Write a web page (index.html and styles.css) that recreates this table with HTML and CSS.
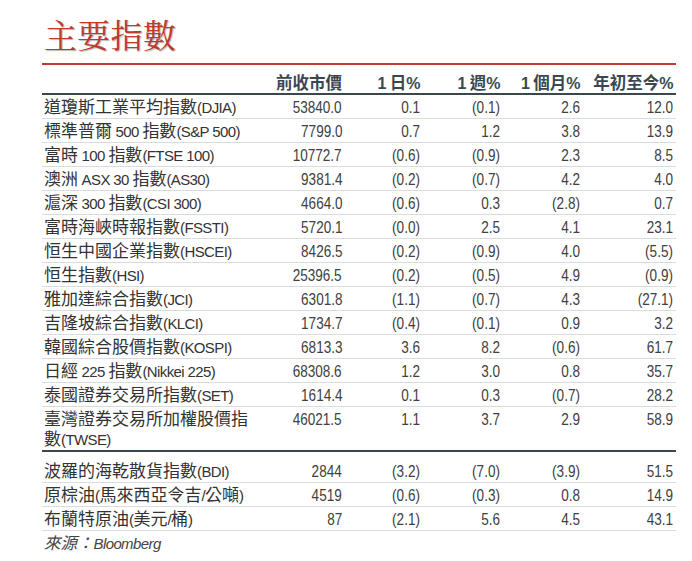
FILE: index.html
```html
<!DOCTYPE html>
<html lang="zh-Hant">
<head>
<meta charset="utf-8">
<title>主要指數</title>
<link rel="stylesheet" href="styles.css">
</head>
<body>
<div class="page">
  <h1 class="title">主要指數</h1>
  <table class="idx">
    <colgroup>
      <col class="c-name"><col class="c-prev"><col class="c-d"><col class="c-w"><col class="c-m"><col class="c-y">
    </colgroup>
    <thead>
      <tr><th></th><th>前收市價</th><th><span class="hn">1</span> 日<span class="hn">%</span></th><th><span class="hn">1</span> 週<span class="hn">%</span></th><th><span class="hn">1</span> 個月<span class="hn">%</span></th><th>年初至今<span class="hn">%</span></th></tr>
    </thead>
    <tbody>
      <tr><td class="name">道瓊斯工業平均指數<span class="lt">(DJIA)</span></td><td><span class="v">53840.0</span></td><td><span class="v">0.1</span></td><td><span class="v">(0.1)</span></td><td><span class="v">2.6</span></td><td><span class="v">12.0</span></td></tr>
      <tr><td class="name">標準普爾<span class="lt"> 500 </span>指數<span class="lt">(S&amp;P 500)</span></td><td><span class="v">7799.0</span></td><td><span class="v">0.7</span></td><td><span class="v">1.2</span></td><td><span class="v">3.8</span></td><td><span class="v">13.9</span></td></tr>
      <tr><td class="name">富時<span class="lt"> 100 </span>指數<span class="lt">(FTSE 100)</span></td><td><span class="v">10772.7</span></td><td><span class="v">(0.6)</span></td><td><span class="v">(0.9)</span></td><td><span class="v">2.3</span></td><td><span class="v">8.5</span></td></tr>
      <tr><td class="name">澳洲<span class="lt"> ASX 30 </span>指數<span class="lt">(AS30)</span></td><td><span class="v">9381.4</span></td><td><span class="v">(0.2)</span></td><td><span class="v">(0.7)</span></td><td><span class="v">4.2</span></td><td><span class="v">4.0</span></td></tr>
      <tr><td class="name">滬深<span class="lt"> 300 </span>指數<span class="lt">(CSI 300)</span></td><td><span class="v">4664.0</span></td><td><span class="v">(0.6)</span></td><td><span class="v">0.3</span></td><td><span class="v">(2.8)</span></td><td><span class="v">0.7</span></td></tr>
      <tr><td class="name">富時海峽時報指數<span class="lt">(FSSTI)</span></td><td><span class="v">5720.1</span></td><td><span class="v">(0.0)</span></td><td><span class="v">2.5</span></td><td><span class="v">4.1</span></td><td><span class="v">23.1</span></td></tr>
      <tr><td class="name">恒生中國企業指數<span class="lt">(HSCEI)</span></td><td><span class="v">8426.5</span></td><td><span class="v">(0.2)</span></td><td><span class="v">(0.9)</span></td><td><span class="v">4.0</span></td><td><span class="v">(5.5)</span></td></tr>
      <tr><td class="name">恒生指數<span class="lt">(HSI)</span></td><td><span class="v">25396.5</span></td><td><span class="v">(0.2)</span></td><td><span class="v">(0.5)</span></td><td><span class="v">4.9</span></td><td><span class="v">(0.9)</span></td></tr>
      <tr><td class="name">雅加達綜合指數<span class="lt">(JCI)</span></td><td><span class="v">6301.8</span></td><td><span class="v">(1.1)</span></td><td><span class="v">(0.7)</span></td><td><span class="v">4.3</span></td><td><span class="v">(27.1)</span></td></tr>
      <tr><td class="name">吉隆坡綜合指數<span class="lt">(KLCI)</span></td><td><span class="v">1734.7</span></td><td><span class="v">(0.4)</span></td><td><span class="v">(0.1)</span></td><td><span class="v">0.9</span></td><td><span class="v">3.2</span></td></tr>
      <tr><td class="name">韓國綜合股價指數<span class="lt">(KOSPI)</span></td><td><span class="v">6813.3</span></td><td><span class="v">3.6</span></td><td><span class="v">8.2</span></td><td><span class="v">(0.6)</span></td><td><span class="v">61.7</span></td></tr>
      <tr><td class="name">日經<span class="lt"> 225 </span>指數<span class="lt">(Nikkei 225)</span></td><td><span class="v">68308.6</span></td><td><span class="v">1.2</span></td><td><span class="v">3.0</span></td><td><span class="v">0.8</span></td><td><span class="v">35.7</span></td></tr>
      <tr><td class="name">泰國證券交易所指數<span class="lt">(SET)</span></td><td><span class="v">1614.4</span></td><td><span class="v">0.1</span></td><td><span class="v">0.3</span></td><td><span class="v">(0.7)</span></td><td><span class="v">28.2</span></td></tr>
      <tr class="grp-end"><td class="name">臺灣證券交易所加權股價指<br>數<span class="lt">(TWSE)</span></td><td><span class="v">46021.5</span></td><td><span class="v">1.1</span></td><td><span class="v">3.7</span></td><td><span class="v">2.9</span></td><td><span class="v">58.9</span></td></tr>
    </tbody>
    <tbody class="sec">
      <tr><td class="name">波羅的海乾散貨指數<span class="lt">(BDI)</span></td><td><span class="v">2844</span></td><td><span class="v">(3.2)</span></td><td><span class="v">(7.0)</span></td><td><span class="v">(3.9)</span></td><td><span class="v">51.5</span></td></tr>
      <tr><td class="name">原棕油<span class="lt">(</span>馬來西亞令吉<span class="lt">/</span>公噸<span class="lt">)</span></td><td><span class="v">4519</span></td><td><span class="v">(0.6)</span></td><td><span class="v">(0.3)</span></td><td><span class="v">0.8</span></td><td><span class="v">14.9</span></td></tr>
      <tr><td class="name">布蘭特原油<span class="lt">(</span>美元<span class="lt">/</span>桶<span class="lt">)</span></td><td><span class="v">87</span></td><td><span class="v">(2.1)</span></td><td><span class="v">5.6</span></td><td><span class="v">4.5</span></td><td><span class="v">43.1</span></td></tr>
    </tbody>
  </table>
  <p class="src">來源：<span class="lt">Bloomberg</span></p>
</div>
</body>
</html>
```

FILE: styles.css
```css
body {
  margin: 0;
  background: #ffffff;
  color: #3a3a3a;
  font-family: "Noto Sans CJK TC", "Liberation Sans", sans-serif;
}

.page {
  padding-left: 42px;
  width: 634px;
}

.title {
  margin: 0;
  padding: 14px 0 9px 2px;
  line-height: 40px;
  font-family: "Noto Serif CJK TC", "Noto Serif CJK SC", "Liberation Serif", "Noto Sans CJK TC", serif;
  font-size: 33px;
  font-weight: normal;
  color: #c0392b;
  text-shadow: 1px 1px 1px rgba(0, 0, 0, 0.3);
  border-bottom: 2px solid #c23b30;
}

.idx {
  width: 634px;
  border-collapse: collapse;
  table-layout: fixed;
  font-size: 17px;
  line-height: 20px;
}

.c-name { width: 228px; }
.c-prev { width: 75px; }
.c-d { width: 78px; }
.c-w { width: 80px; }
.c-m { width: 80px; }
.c-y { width: 93px; }

.idx th {
  height: 20px;
  padding: 7px 3px 1px;
  text-align: right;
  font-size: 16.5px;
  font-weight: bold;
  color: #3b474f;
  border-bottom: 2px solid #3b474f;
  white-space: nowrap;
}

.hn {
  font-family: "Liberation Sans", sans-serif;
  font-size: 16px;
  line-height: 1;
  letter-spacing: -0.5px;
}

.idx td {
  height: 20px;
  padding: 1px 3px 2px;
  text-align: right;
  vertical-align: top;
  border-bottom: 1px solid #d8dcdf;
  color: #404040;
}

.idx td.name {
  text-align: left;
  padding-left: 2px;
  color: #333333;
}

.v {
  display: inline-block;
  font-family: "Liberation Sans", sans-serif;
  font-size: 16.5px;
  line-height: 1;
  transform: scaleX(0.82);
  transform-origin: right center;
}

.lt {
  font-family: "Liberation Sans", sans-serif;
  font-size: 15px;
  line-height: 1;
  letter-spacing: -0.6px;
}

.idx tr.grp-end td {
  border-bottom: 2px solid #3b474f;
}

.idx .sec tr:first-child td {
  padding-top: 8px;
  padding-bottom: 2px;
}

.src {
  margin: 0;
  padding-left: 2px;
  font-size: 16.5px;
  line-height: 22px;
  font-style: italic;
  color: #444444;
}
```
